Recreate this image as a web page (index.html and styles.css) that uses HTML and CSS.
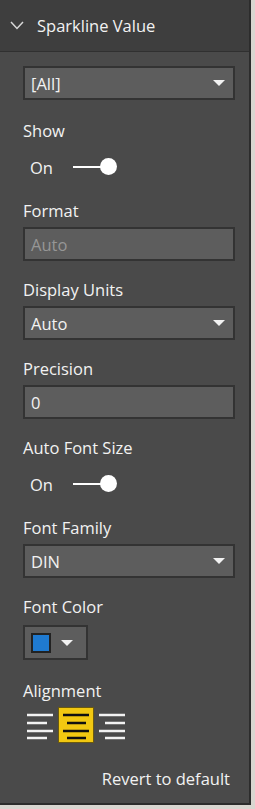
FILE: index.html
```html
<!DOCTYPE html>
<html lang="en">
<head>
    <meta charset="UTF-8">
    <meta name="viewport" content="width=device-width, initial-scale=1.0">
    <link rel="stylesheet" href="styles.css">
    <title>Sparkline Value</title>
</head>
<body>

<div class="panel">
    <div class="panel-header">
        <svg class="chevron" width="14" height="9" viewBox="0 0 14 9">
            <polyline points="1,1 7,7.5 13,1" fill="none" stroke="#d8d8d8" stroke-width="1.5"/>
        </svg>
        <span>Sparkline Value</span>
    </div>

    <div class="panel-body">
        <div class="select top-select">
            <span>[All]</span>
            <span class="caret"></span>
        </div>

        <div class="label">Show</div>
        <div class="toggle">
            <span class="toggle-text">On</span>
            <span class="toggle-track"><span class="toggle-knob"></span></span>
        </div>

        <div class="label">Format</div>
        <div class="input disabled">Auto</div>

        <div class="label">Display Units</div>
        <div class="select">
            <span>Auto</span>
            <span class="caret"></span>
        </div>

        <div class="label">Precision</div>
        <div class="input">0</div>

        <div class="label">Auto Font Size</div>
        <div class="toggle">
            <span class="toggle-text">On</span>
            <span class="toggle-track"><span class="toggle-knob"></span></span>
        </div>

        <div class="label">Font Family</div>
        <div class="select">
            <span>DIN</span>
            <span class="caret"></span>
        </div>

        <div class="label">Font Color</div>
        <div class="color-picker">
            <span class="swatch"></span>
            <span class="caret"></span>
        </div>

        <div class="label">Alignment</div>
        <div class="align-group">
            <svg class="align-icon" width="26" height="36" viewBox="0 0 26 36">
                <g stroke="#f2f2f2" stroke-width="2.5">
                    <line x1="0" y1="8" x2="26" y2="8"/>
                    <line x1="0" y1="16" x2="20" y2="16"/>
                    <line x1="0" y1="24" x2="26" y2="24"/>
                    <line x1="0" y1="31" x2="20" y2="31"/>
                </g>
            </svg>
            <svg class="align-icon active" width="36" height="36" viewBox="0 0 36 36">
                <g stroke="#111" stroke-width="2.5">
                    <line x1="5" y1="8" x2="31" y2="8"/>
                    <line x1="9" y1="16" x2="28" y2="16"/>
                    <line x1="5" y1="24" x2="31" y2="24"/>
                    <line x1="9" y1="31" x2="28" y2="31"/>
                </g>
            </svg>
            <svg class="align-icon" width="26" height="36" viewBox="0 0 26 36">
                <g stroke="#f2f2f2" stroke-width="2.5">
                    <line x1="0" y1="8" x2="26" y2="8"/>
                    <line x1="6" y1="16" x2="26" y2="16"/>
                    <line x1="0" y1="24" x2="26" y2="24"/>
                    <line x1="6" y1="31" x2="26" y2="31"/>
                </g>
            </svg>
        </div>

        <div class="revert">Revert to default</div>
    </div>
</div>

</body>
</html>
```

FILE: styles.css
```css
body {
    margin: 0;
    background: #d9d6d0;
    font-family: "Open Sans", "Noto Sans", sans-serif;
    color: #f2f2f2;
}

.panel {
    width: 249px;
    height: 803px;
    background: #4a4a4a;
    border-right: 2px solid #2c2c2c;
    border-bottom: 2px solid #2c2c2c;
}

.panel-header {
    height: 51px;
    background: #3e3e3e;
    border-bottom: 1px solid #303030;
    display: flex;
    align-items: center;
    padding-left: 10px;
    font-size: 16.5px;
}

.chevron {
    margin-right: 13px;
}

.panel-body {
    padding: 14px 14px 0 23px;
    font-size: 16.5px;
}

.label {
    line-height: 20px;
    margin-bottom: 6px;
}

.select, .input {
    box-sizing: border-box;
    height: 34px;
    background: #5d5d5d;
    border: 2px solid #333;
    display: flex;
    align-items: center;
    padding: 0 6px;
    margin-bottom: 19px;
}

.select {
    justify-content: space-between;
}

.top-select {
    margin-bottom: 21px;
}

.input.disabled {
    color: #969696;
}

.caret {
    width: 0;
    height: 0;
    border-left: 6px solid transparent;
    border-right: 6px solid transparent;
    border-top: 6px solid #f2f2f2;
    margin-right: 2px;
}

.toggle {
    display: flex;
    align-items: center;
    height: 24px;
    margin: 14px 0 22px 7px;
}

.toggle-text {
    width: 43px;
}

.toggle-track {
    position: relative;
    width: 35px;
    height: 2px;
    background: #fff;
}

.toggle-knob {
    position: absolute;
    right: -9px;
    top: -8px;
    width: 17px;
    height: 17px;
    border-radius: 50%;
    background: #fff;
}

.color-picker {
    box-sizing: border-box;
    width: 65px;
    height: 35px;
    background: #5d5d5d;
    border: 2px solid #333;
    display: flex;
    align-items: center;
    padding-left: 6px;
    margin: 8px 0 21px;
}

.swatch {
    box-sizing: border-box;
    width: 20px;
    height: 20px;
    background: #1f7ad0;
    border: 2px solid #222;
    margin-right: 10px;
}

.align-group {
    display: flex;
    gap: 5px;
    margin-left: 4px;
}

.align-icon {
    display: block;
}

.align-icon.active {
    background: #f2c811;
    outline: 1px solid #6b5a10;
    outline-offset: -1px;
}

.revert {
    text-align: right;
    margin: 26px 5px 0 0;
    line-height: 20px;
}
```
